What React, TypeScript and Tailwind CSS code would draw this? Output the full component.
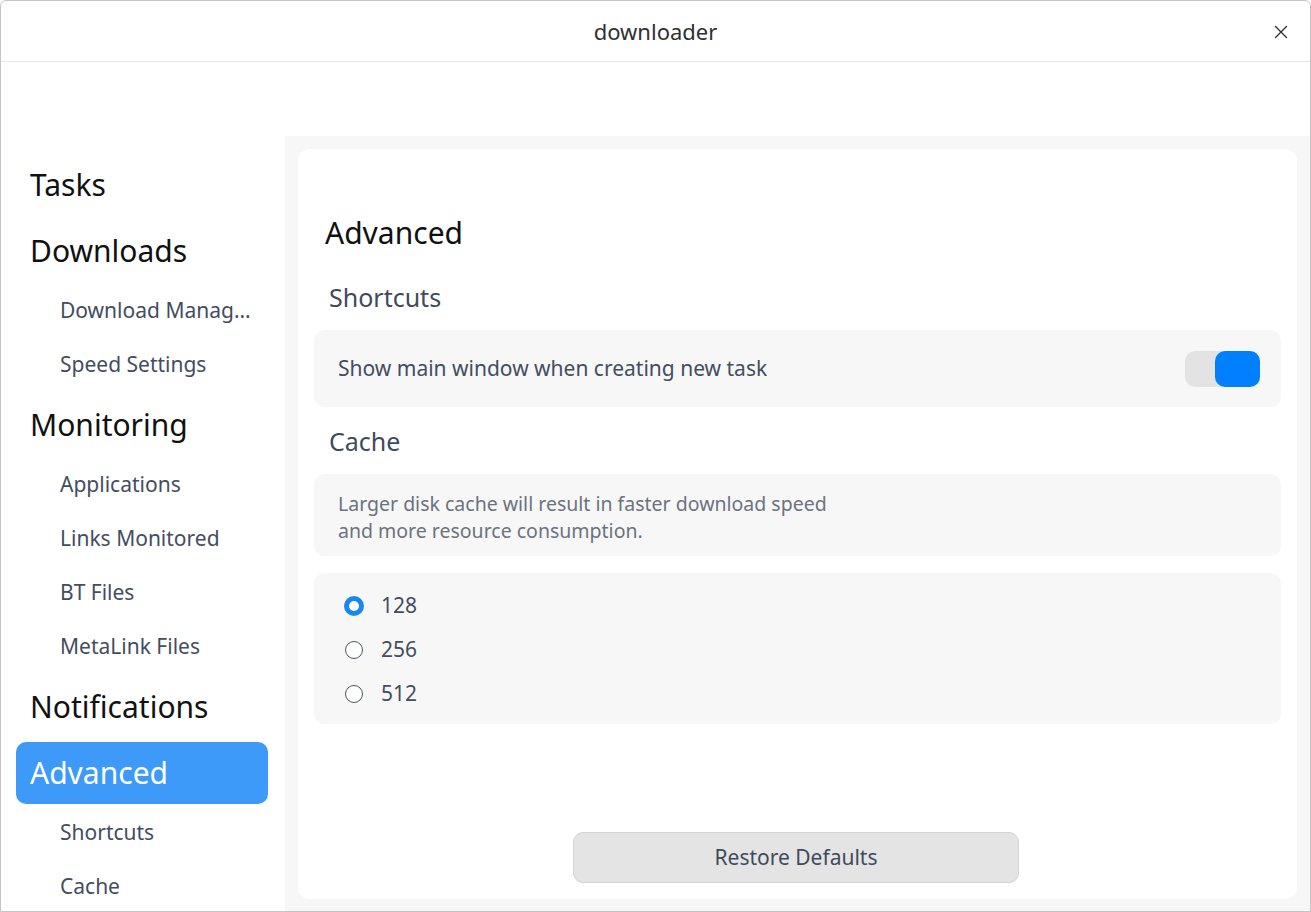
import { useState } from 'react'

type NavItem = { label: string; sub?: boolean; active?: boolean }

const NAV: NavItem[] = [
  { label: 'Tasks' },
  { label: 'Downloads' },
  { label: 'Download Management', sub: true },
  { label: 'Speed Settings', sub: true },
  { label: 'Monitoring' },
  { label: 'Applications', sub: true },
  { label: 'Links Monitored', sub: true },
  { label: 'BT Files', sub: true },
  { label: 'MetaLink Files', sub: true },
  { label: 'Notifications' },
  { label: 'Advanced', active: true },
  { label: 'Shortcuts', sub: true },
  { label: 'Cache', sub: true },
]

const CACHE_SIZES = ['128', '256', '512']

function SidebarRow({ item }: { item: NavItem }) {
  if (item.sub) {
    return (
      <div className="flex h-[54px] shrink-0 items-center pl-[59px] pr-[30px] text-[21px] text-[#434d5f]">
        <span className="truncate">{item.label}</span>
      </div>
    )
  }
  return (
    <div className="flex h-[66px] shrink-0 items-center px-[15px]">
      <div
        className={`flex h-[62px] w-[252px] items-center rounded-[10px] px-[14px] pb-[2px] text-[30px] ${
          item.active ? 'bg-[#3d9af9] text-white' : 'text-[#111]'
        }`}
      >
        {item.label}
      </div>
    </div>
  )
}

function Radio({ checked }: { checked: boolean }) {
  return checked ? (
    <span className="box-border h-[20px] w-[20px] rounded-full border-[5px] border-[#1a86f0] bg-white" />
  ) : (
    <span className="ml-[1px] mr-[1px] box-border h-[18px] w-[18px] rounded-full border-[1.5px] border-[#4d5563] bg-white" />
  )
}

export default function App() {
  const [showMain, setShowMain] = useState(true)
  const [cache, setCache] = useState('128')

  return (
    <div
      className="flex h-[912px] w-[1311px] flex-col overflow-hidden rounded-t-[6px] border border-[#c4c4c4] bg-white"
      style={{ fontFamily: '"Noto Sans", "Open Sans", sans-serif' }}
    >
      {/* Title bar */}
      <div className="relative flex h-[61px] shrink-0 items-center justify-center border-b border-[#e6e6e6]">
        <span className="text-[22px] text-[#303030]">downloader</span>
        <button type="button" className="absolute right-[20px] top-[22px] flex h-[18px] w-[18px] items-center justify-center">
          <svg width="14" height="14" viewBox="0 0 14 14" fill="none" stroke="#333" strokeWidth="1.4" strokeLinecap="round">
            <path d="M1.5 1.5 12.5 12.5M12.5 1.5 1.5 12.5" />
          </svg>
        </button>
      </div>

      <div className="flex min-h-0 flex-1">
        {/* Sidebar */}
        <nav className="flex w-[284px] shrink-0 flex-col overflow-hidden pt-[90px]">
          {NAV.map((item) => (
            <SidebarRow key={item.label} item={item} />
          ))}
        </nav>

        {/* Content */}
        <div className="flex min-w-0 flex-1 flex-col pt-[74px]">
          <div className="flex flex-1 flex-col bg-[#f7f7f7] px-[13px] pb-[12px] pt-[13px]">
            <div className="flex flex-1 flex-col rounded-[12px] bg-white px-[16px] pt-[63px]">
              <h1 className="flex h-[40px] items-center pl-[11px] text-[30px] font-normal text-[#111]">Advanced</h1>

              <h2 className="mt-[28px] flex h-[36px] items-center pl-[15px] text-[25px] font-normal text-[#3f4a5c]">Shortcuts</h2>
              <div className="mt-[14px] flex h-[77px] items-center justify-between rounded-[10px] bg-[#f7f7f7] pl-[24px] pr-[21px]">
                <span className="text-[21px] text-[#434d5f]">Show main window when creating new task</span>
                <button
                  type="button"
                  onClick={() => setShowMain((v) => !v)}
                  className={`flex h-[36px] w-[75px] rounded-[10px] bg-[#e3e3e3] ${showMain ? 'justify-end' : 'justify-start'}`}
                >
                  <span className={`h-[36px] w-[45px] rounded-[10px] ${showMain ? 'bg-[#0080ff]' : 'bg-white'}`} />
                </button>
              </div>

              <h2 className="mt-[17px] flex h-[36px] items-center pl-[15px] text-[25px] font-normal text-[#3f4a5c]">Cache</h2>
              <div className="mt-[14px] rounded-[10px] bg-[#f7f7f7] px-[24px] pb-[12px] pt-[16px] text-[19.5px] leading-[27px] text-[#6b7280]">
                Larger disk cache will result in faster download speed
                <br />
                and more resource consumption.
              </div>

              <div className="mt-[17px] flex flex-col rounded-[10px] bg-[#f7f7f7] pb-[8px] pl-[30px] pt-[11px]">
                {CACHE_SIZES.map((size) => (
                  <label
                    key={size}
                    onClick={() => setCache(size)}
                    className="flex h-[44px] cursor-pointer items-center gap-[17px] text-[21px] text-[#434d5f]"
                  >
                    <Radio checked={cache === size} />
                    <span>{size}</span>
                  </label>
                ))}
              </div>

              <div className="mb-[16px] mt-auto flex justify-center">
                <button
                  type="button"
                  className="ml-[-3px] h-[51px] w-[446px] rounded-[10px] border border-[#d4d4d4] bg-[#e4e4e4] text-[21px] text-[#3f4a5c]"
                >
                  Restore Defaults
                </button>
              </div>
            </div>
          </div>
        </div>
      </div>
    </div>
  )
}
